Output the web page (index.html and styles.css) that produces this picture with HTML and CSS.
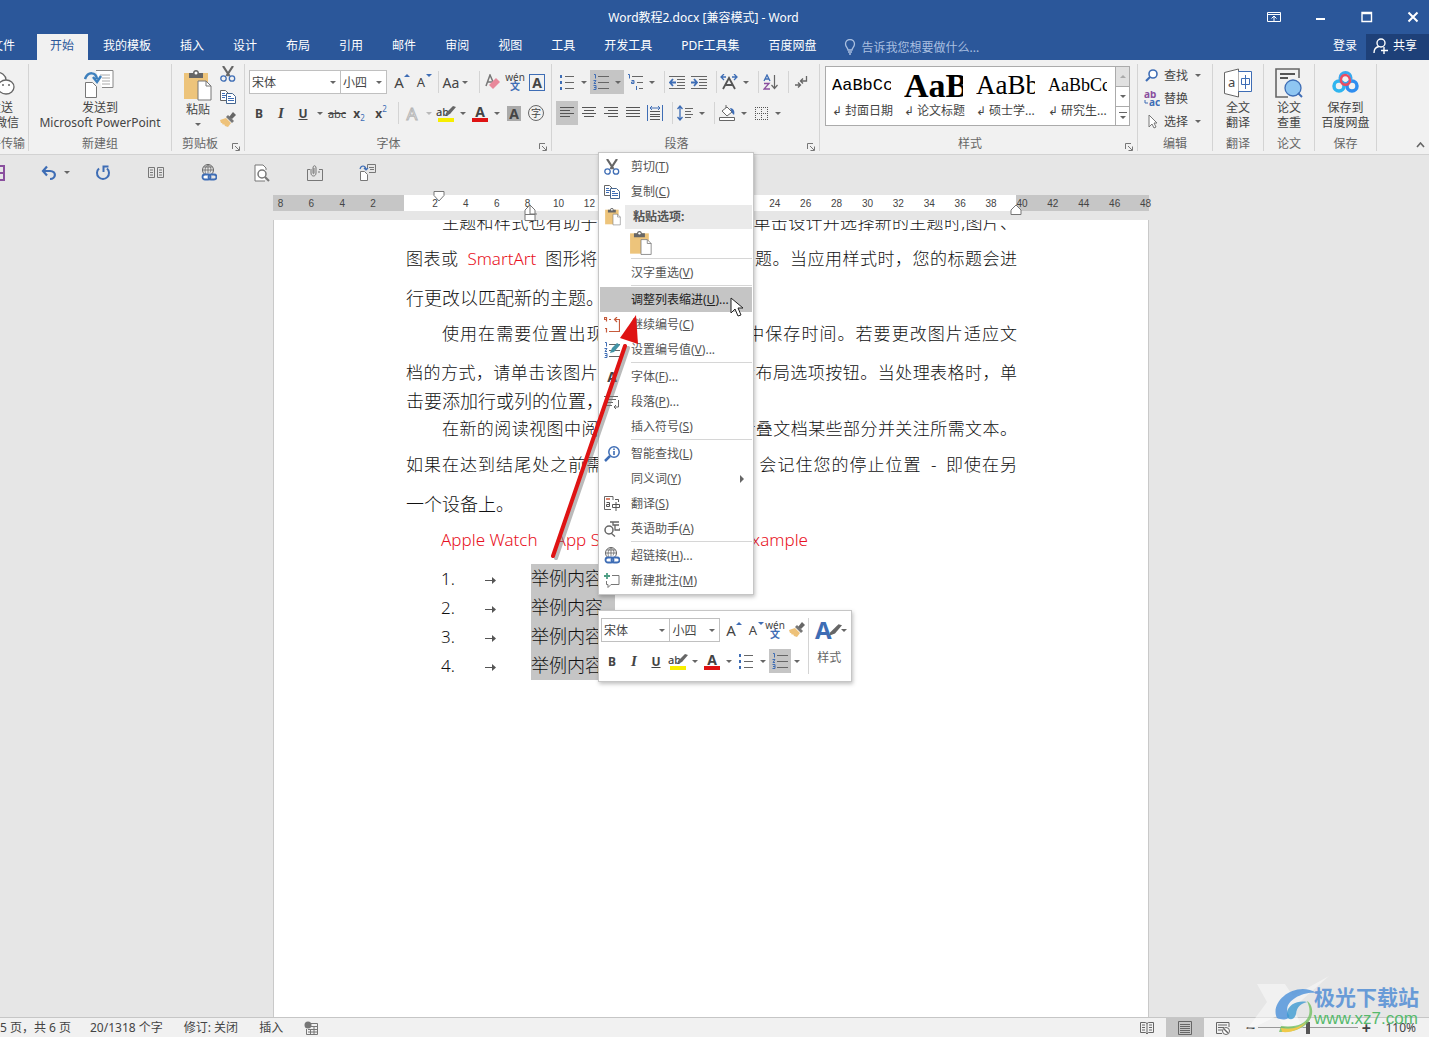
FILE: index.html
```html
<!DOCTYPE html>
<html lang="zh-CN">
<head>
<meta charset="utf-8">
<title>Word教程2.docx - Word</title>
<link rel="stylesheet" href="styles.css">
</head>
<body>
<svg class="defs" aria-hidden="true">
  <symbol id="cut" viewBox="0 0 16 16"><path d="M3 0l6.500 10M13 0L6.500 10" stroke="#666" stroke-width="2.200" fill="none"/><circle cx="3.500" cy="12.500" r="2.700" fill="none" stroke="#3e6db5" stroke-width="1.300"/><circle cx="12" cy="12.500" r="2.700" fill="none" stroke="#3e6db5" stroke-width="1.300"/></symbol>
  <symbol id="copy" viewBox="0 0 16 16"><path d="M.5 1.500h5l3 3v7h-8z" fill="#fff" stroke="#666"/><path d="M2 4.500h3M2 6.500h4M2 8.500h3" stroke="#3e6db5"/><path d="M6.500 4.500h6l3 3v7h-9z" fill="#fff" stroke="#44658f"/><path d="M8 7.500h3M8 9.500h6M8 11.500h6" stroke="#3e6db5"/></symbol>
  <symbol id="brush" viewBox="0 0 16 16"><path d="M0 8l6-2 5 5-3 4-3-1-1-2-1 1-1-2-1 0z" fill="#eec27a"/><path d="M6 5l2-2 6 6-2 2z" fill="#777"/><path d="M9 5l4-5 3 3-4 4z" fill="#666"/></symbol>
  <symbol id="paste" viewBox="0 0 28 32"><path d="M0 3h24v26H0z" fill="#edc47b"/><path d="M5 3h4c0-4 6-4 6 0h4v5H5z" fill="#666"/><circle cx="12" cy="3" r="1.500" fill="#fff"/><path d="M14 11h8l5 5v14H14z" fill="#fff" stroke="#777"/><path d="M22 11v5h5" fill="none" stroke="#777"/></symbol>
  <symbol id="bullets" viewBox="0 0 16 16"><path d="M1 1h2v3H1zM1 7h2v3H1zM1 13h2v3H1z" fill="#3e6db5"/><path d="M6 2.500h9M6 8.500h9M6 14.500h9" stroke="#666"/></symbol>
  <symbol id="numbers" viewBox="0 0 16 16"><path d="M1 .5h1.500v4M0.500 6.500h2.500l-2 3h2M0.500 11.500h2.500v4h-2.500M1 13.500h2" fill="none" stroke="#3e6db5"/><path d="M5 2.500h11M5 8.500h11M5 14.500h11" stroke="#666"/></symbol>
  <symbol id="globe" viewBox="0 0 16 18"><circle cx="7" cy="6" r="5.500" fill="none" stroke="#666"/><path d="M1.500 6h11M2.500 3h9M7 .5v9M7 .5c-4 3-3 8-2 10M7 .5c4 3 3 6 2 8" fill="none" stroke="#666" stroke-width=".8"/><rect x="1.500" y="10.500" width="8" height="5" rx="2.500" fill="#fff" stroke="#3e6db5" stroke-width="1.800"/><rect x="7.500" y="10.500" width="8" height="5" rx="2.500" fill="none" stroke="#3e6db5" stroke-width="1.800"/></symbol>
  <symbol id="launch" viewBox="0 0 8 8"><path d="M.5 6V.5H6M3 3l4 4M7.500 3.500v4h-4" fill="none" stroke="#777"/></symbol>
  <symbol id="pen" viewBox="0 0 12 10"><path d="M2 7l7-7 3 1-6 7-5 2z" fill="#666"/></symbol>
  <symbol id="sendto" viewBox="0 0 32 30"><path d="M12 1.500h17v17H18" fill="#fff" stroke="#888"/><path d="M16 6h10M18 9h8M18 12h8M18 15h8" stroke="#aaa"/><path d="M1 10c3-8 11-7 12 0M9 8l4 5 4-6" fill="none" stroke="#3e80bd" stroke-width="2.500"/><path d="M1.500 13.500h7l4 4v11h-11z" fill="#fff" stroke="#777"/></symbol>
</svg>

<header class="titlebar">
  <h1>Word教程2.docx [兼容模式] - Word</h1>
  <div class="window-buttons">
    <button aria-label="功能区显示选项"><svg width="14" height="12"><path d="M.5 1.500h13v9H.5zM.5 3.500h13M7 10V5.500M4.500 7.500L7 5l2.500 2.500" fill="none" stroke="#fff"/></svg></button>
    <button aria-label="最小化"><svg width="12" height="12"><path d="M1 8h9" stroke="#fff" stroke-width="2"/></svg></button>
    <button aria-label="最大化"><svg width="12" height="12"><path d="M1 1.500h9.500v9H1zM1 2.500h9" fill="none" stroke="#fff" stroke-width="1.400"/></svg></button>
    <button aria-label="关闭"><svg width="12" height="12"><path d="M1.500 1.500l9 9M10.500 1.500l-9 9" stroke="#fff" stroke-width="2"/></svg></button>
  </div>
</header>

<nav class="tabs">
  <button class="file">文件</button><button class="active">开始</button><button>我的模板</button><button>插入</button><button>设计</button><button>布局</button><button>引用</button><button>邮件</button><button>审阅</button><button>视图</button><button>工具</button><button>开发工具</button><button>PDF工具集</button><button>百度网盘</button>
  <label class="tell"><svg width="12" height="16"><path d="M4 11C4 9 1.500 8 1.500 5a4.500 4.500 0 0 1 9 0c0 3-2.500 4-2.500 6zM4 13h4M5 15h2" fill="none" stroke="#a9bfe0" stroke-width="1.300"/></svg><input type="text" placeholder="告诉我您想要做什么..." aria-label="告诉我您想要做什么"></label>
  <button class="login">登录</button>
  <button class="share"><svg width="16" height="16"><circle cx="8" cy="5" r="4" fill="none" stroke="#fff" stroke-width="1.400"/><path d="M1 15c0-4 2-6 5-6.500M11 9v7M8 12.500h7" fill="none" stroke="#fff" stroke-width="1.400"/></svg>共享</button>
</nav>

<section class="ribbon" aria-label="功能区">
  <div class="group g-wechat">
    <button class="big"><svg width="30" height="32"><ellipse cx="10" cy="12" rx="10" ry="8" fill="#fff" stroke="#666" stroke-width="1.300"/><ellipse cx="20" cy="19" rx="8" ry="7" fill="#fff" stroke="#666" stroke-width="1.300"/><circle cx="17" cy="17" r="1" fill="#666"/><circle cx="23" cy="17" r="1" fill="#666"/><circle cx="13" cy="10" r="1" fill="#666"/></svg><span>发送<br>到微信</span></button>
    <h2>文件传输</h2>
  </div>
  <div class="group g-ppt">
    <button class="big"><svg width="32" height="32"><use href="#sendto"/></svg><span>发送到<br>Microsoft PowerPoint</span></button>
    <h2>新建组</h2>
  </div>
  <div class="group g-clip">
    <div class="clip">
      <button class="big"><svg width="28" height="32"><use href="#paste"/></svg><span>粘贴</span><i class="tri"></i></button>
      <div class="stack"><button aria-label="剪切"><svg width="16" height="16"><use href="#cut"/></svg></button><button aria-label="复制"><svg width="16" height="16"><use href="#copy"/></svg></button><button aria-label="格式刷"><svg width="16" height="16"><use href="#brush"/></svg></button></div>
    </div>
    <h2>剪贴板</h2><svg class="launch" width="8" height="8"><use href="#launch"/></svg>
  </div>
  <div class="group g-font">
    <div class="row">
      <label class="combo font"><select aria-label="字体"><option>宋体</option></select></label><label class="combo size"><select aria-label="字号"><option>小四</option></select></label>
      <button class="t grow" aria-label="增大字号">A<i class="up"></i></button><button class="t shrink" aria-label="减小字号">A<i class="down"></i></button>
      <i class="sep"></i><button class="case">Aa<i class="tri"></i></button><i class="sep"></i>
      <button class="t" aria-label="清除格式"><svg width="16" height="16"><path d="M1 12L5 1l4 9M3 8h4" fill="none" stroke="#777" stroke-width="1.500"/><path d="M4 11l7-7 4 4-7 7z" fill="#e8889a"/></svg></button>
      <button class="t pinyin"><span>wén</span><b>文</b></button>
      <button class="t boxed"><b>A</b></button>
    </div>
    <div class="row">
      <button class="t"><b>B</b></button><button class="t serif"><i>I</i></button><button class="t"><b><u>U</u></b></button><i class="tri"></i>
      <button class="t abc"><s>abc</s></button><button class="t sub"><b>x</b><sub>2</sub></button><button class="t sup"><b>x</b><sup>2</sup></button>
      <i class="sep"></i><button class="t outline">A</button><i class="tri pale"></i>
      <button class="t hl"><b>ab</b><svg width="12" height="10"><use href="#pen"/></svg></button><i class="tri"></i><button class="t fc"><b>A</b></button><i class="tri"></i>
      <button class="t shade"><b>A</b></button><button class="t circled"><span>字</span></button>
    </div>
    <h2>字体</h2><svg class="launch" width="8" height="8"><use href="#launch"/></svg>
  </div>
  <div class="group g-para">
    <div class="row">
      <button class="t" aria-label="项目符号"><svg width="16" height="16"><use href="#bullets"/></svg></button><i class="tri"></i>
      <button class="t on" aria-label="编号"><svg width="16" height="16"><use href="#numbers"/></svg></button><span class="on"><i class="tri"></i></span>
      <button class="t" aria-label="多级列表"><svg width="16" height="16"><path d="M1 .5h1.500v4M4.500 6.500h2.500v3H4.500v-1.500H7M9.500 12v4" fill="none" stroke="#3e6db5"/><path d="M5 2.500h11M10 8.500h6M12 14.500h4" stroke="#666"/></svg></button><i class="tri"></i><i class="sep"></i>
      <button class="t" aria-label="减少缩进"><svg width="16" height="16"><path d="M0 2.500h16M8 5.500h8M8 8.500h8M8 11.500h8M0 14.500h16" stroke="#666"/><path d="M7 8.500H1M4 5L1 8.500 4 12" fill="none" stroke="#3e6db5" stroke-width="1.800"/></svg></button>
      <button class="t" aria-label="增加缩进"><svg width="16" height="16"><path d="M0 2.500h16M8 5.500h8M8 8.500h8M8 11.500h8M0 14.500h16" stroke="#666"/><path d="M0 8.500h6M3 5l3 3.500L3 12" fill="none" stroke="#3e6db5" stroke-width="1.800"/></svg></button><i class="sep"></i>
      <button class="t" aria-label="中文版式"><svg width="18" height="16"><path d="M3 15l6-11 6 11M5 11h8" fill="none" stroke="#555" stroke-width="1.800"/><path d="M6 3H1M4 0L1 3l3 3M12 3h5M14 0l3 3-3 3" fill="none" stroke="#3e6db5" stroke-width="1.300"/></svg></button><i class="tri"></i><i class="sep"></i>
      <button class="t" aria-label="排序"><svg width="16" height="16"><path d="M1 7l3-6 3 6M2 5h4" fill="none" stroke="#3e6db5" stroke-width="1.300"/><path d="M1 9.500h5l-5 5.500h6" fill="none" stroke="#8a4f9e" stroke-width="1.300"/><path d="M11.500 1v13M8.500 11l3 3.500 3-3.500" fill="none" stroke="#666" stroke-width="1.200"/></svg></button><i class="sep"></i>
      <button class="t" aria-label="显示编辑标记"><svg width="14" height="14"><path d="M12.500 1v5H7M9 3.500L6.500 6 9 8.500M1 10h5M4 7.500L6.500 10 4 12.500" fill="none" stroke="#666" stroke-width="1.300"/></svg></button>
    </div>
    <div class="row">
      <button class="t on" aria-label="左对齐"><svg width="14" height="14"><path d="M0 1.500h14M0 4.500h10M0 7.500h14M0 10.500h10" stroke="#555"/></svg></button><button class="t" aria-label="居中"><svg width="14" height="14"><path d="M0 1.500h14M2 4.500h10M0 7.500h14M2 10.500h10" stroke="#555"/></svg></button><button class="t" aria-label="右对齐"><svg width="14" height="14"><path d="M0 1.500h14M4 4.500h10M0 7.500h14M4 10.500h10" stroke="#555"/></svg></button><button class="t" aria-label="两端对齐"><svg width="14" height="14"><path d="M0 1.500h14M0 4.500h14M0 7.500h14M0 10.500h14" stroke="#555"/></svg></button><button class="t" aria-label="分散对齐"><svg width="16" height="16"><path d="M.5 0v16M15.500 0v16M3 3h10M5 1L3 3l2 2M11 1l2 2-2 2" fill="none" stroke="#3e6db5"/><path d="M3 6.500h10M3 9.500h10M3 11.500h10M3 14.500h10" stroke="#555"/></svg></button>
      <i class="sep"></i><button class="t" aria-label="行距"><svg width="16" height="16"><path d="M3 1v14M.5 4L3 1l2.500 3M.5 12L3 15l2.500-3" fill="none" stroke="#3e6db5" stroke-width="1.300"/><path d="M8 3.500h8M8 6.500h6M8 9.500h8M8 12.500h6" stroke="#666"/></svg></button><i class="tri"></i><i class="sep"></i>
      <button class="t" aria-label="底纹"><svg width="16" height="16"><path d="M3 6l5-4 5 5-5 4zM7 3V0" fill="#fff" stroke="#666"/><path d="M11 3c4 0 5 4 4 7l-2-2z" fill="#3e6db5"/><path d="M.5 12.500h15v3H.5z" fill="#fff" stroke="#666"/></svg></button><i class="tri"></i>
      <button class="t" aria-label="边框"><svg width="13" height="13"><path d="M.5 0v13M12.500 0v13M6.500 0v13M0 .5h13M0 6.500h13M0 12.500h13" fill="none" stroke="#555" stroke-dasharray="1 1"/></svg></button><i class="tri"></i>
    </div>
    <h2>段落</h2><svg class="launch" width="8" height="8"><use href="#launch"/></svg>
  </div>
  <div class="group g-style">
    <div class="gallery">
      <button><span class="sample mono">AaBbCc</span><span>↲ 封面日期</span></button>
      <button><span class="sample heavy">AaBb</span><span>↲ 论文标题</span></button>
      <button><span class="sample large">AaBb</span><span>↲ 硕士学...</span></button>
      <button><span class="sample plain">AaBbCc</span><span>↲ 研究生...</span></button>
      <div class="scroll"><button class="off" aria-label="上一行"><i class="up"></i></button><button aria-label="下一行"><i class="tri"></i></button><button aria-label="其他"><svg width="8" height="8"><path d="M0 .5h8" stroke="#666"/><path d="M1 4h6L4 7z" fill="#666"/></svg></button></div>
    </div>
    <h2>样式</h2><svg class="launch" width="8" height="8"><use href="#launch"/></svg>
  </div>
  <div class="group g-edit">
    <button><svg width="16" height="14"><circle cx="9" cy="5" r="4" fill="#fff" stroke="#3e6db5" stroke-width="1.600"/><path d="M6 8l-4 4" stroke="#3e6db5" stroke-width="2.200"/></svg>查找<i class="tri"></i></button>
    <button><svg width="16" height="16"><text x="0" y="7" class="glyph violet">ab</text><text x="5" y="15" class="glyph blue">ac</text><path d="M1 9v3h3" fill="none" stroke="#3e6db5"/></svg>替换</button>
    <button><svg width="16" height="16"><path d="M5 1v12l3-3 2 4 2-1-2-4h3z" fill="#fff" stroke="#777"/></svg>选择<i class="tri"></i></button>
    <h2>编辑</h2>
  </div>
  <div class="group g-narrow">
    <button class="big"><svg width="28" height="32"><path d="M.5 4.500L14.500 1v28L.5 25.500z" fill="#fff" stroke="#666"/><path d="M14.500 3.500h13v20h-13" fill="#fff" stroke="#3e6db5"/><text x="4" y="19" class="letter">a</text><path d="M17.500 10.500h8v6h-8zM21.500 7v14" fill="none" stroke="#3e6db5"/></svg><span>全文<br>翻译</span></button>
    <h2>翻译</h2>
  </div>
  <div class="group g-narrow">
    <button class="big"><svg width="28" height="32"><path d="M24 10V1H1v28h12" fill="none" stroke="#666" stroke-width="1.600"/><path d="M5 6h15M5 10h8" stroke="#555" stroke-width="2"/><circle cx="18" cy="20" r="8" fill="#8fc6f2" stroke="#3e6db5" stroke-width="1.300"/><path d="M23 25l4 4" stroke="#3e6db5" stroke-width="2"/></svg><span>论文<br>查重</span></button>
    <h2>论文</h2>
  </div>
  <div class="group g-baidu">
    <button class="big"><svg width="28" height="32"><circle cx="7" cy="18" r="5" fill="none" stroke="#2fb5ef" stroke-width="3.500"/><circle cx="20" cy="18" r="5" fill="none" stroke="#2f8ef0" stroke-width="3.500"/><circle cx="13.500" cy="10" r="5.500" fill="none" stroke="#38a9f0" stroke-width="3"/><path d="M9 13c-1-8 9-8 9 0-1 5-8 5-9 0" fill="none" stroke="#ea4d63" stroke-width="2.500"/></svg><span>保存到<br>百度网盘</span></button>
    <h2>保存</h2>
  </div>
  <button class="collapse" aria-label="折叠功能区"><svg width="9" height="6"><path d="M1 5l3.500-4L8 5" fill="none" stroke="#666" stroke-width="1.600"/></svg></button>
</section>

<div class="quick" role="toolbar" aria-label="快速访问工具栏">
  <button aria-label="保存"><svg width="16" height="16"><path d="M1 1h14v14H1z" fill="none" stroke="#8a4f9e" stroke-width="2"/><path d="M2 8h12" stroke="#8a4f9e" stroke-width="2"/></svg></button>
  <button aria-label="撤消"><svg width="16" height="16"><path d="M2 6h7c7 0 6 8 0 8M6 1.500L2 6l4 4.500" fill="none" stroke="#3e6db5" stroke-width="2.200"/></svg><i class="tri"></i></button>
  <button aria-label="重复"><svg width="16" height="16"><path d="M4 3.500a6 6 0 1 0 8 0M13.500 1.500H8.500V7" fill="none" stroke="#3e6db5" stroke-width="2"/></svg></button>
  <button aria-label="双页"><svg width="18" height="14"><path d="M1.500 1.500h6v10h-6zM10.500 1.500h6v10h-6zM3 4h3M3 6.500h3M3 9h3M12 4h3M12 6.500h3M12 9h3" fill="none" stroke="#777"/></svg></button>
  <button aria-label="超链接"><svg width="16" height="18"><use href="#globe"/></svg></button>
  <button aria-label="打印预览"><svg width="16" height="18"><path d="M12 6V4L9 1H1v16h10" fill="#fff" stroke="#777"/><circle cx="8" cy="10" r="4" fill="#fff" stroke="#777" stroke-width="1.500"/><path d="M11 13l4 4" stroke="#777" stroke-width="2.200"/></svg></button>
  <button aria-label="附件"><svg width="18" height="16"><path d="M4 4.500H1.500v11h15v-11H13M12 7h2" fill="none" stroke="#777"/><path d="M5 4v4c0 4 5 4 5 0V3c0-3-3-3-3 0v5c0 1 1 1 1 0V3" fill="none" stroke="#777"/></svg></button>
  <button aria-label="发送到 PowerPoint"><svg width="18" height="17"><path d="M8.500 5V.5h8v8H10M10 3.500h5M11 5.500h4" fill="none" stroke="#777"/><path d="M1 5c1-4 5-4 6 0M5 4l2 2 2-2" fill="none" stroke="#3e6db5" stroke-width="1.200"/><path d="M1.500 7.500h4l3 3v6h-7z" fill="#fff" stroke="#777"/></svg></button>
</div>

<main class="workspace">
  <div class="ruler">
    <ol><li>8</li><li>6</li><li>4</li><li>2</li><li></li><li>2</li><li>4</li><li>6</li><li>8</li><li>10</li><li>12</li><li>14</li><li>16</li><li>18</li><li>20</li><li>22</li><li>24</li><li>26</li><li>28</li><li>30</li><li>32</li><li>34</li><li>36</li><li>38</li><li>40</li><li>42</li><li>44</li><li>46</li><li>48</li></ol>
    <svg class="mark first" width="12" height="11"><path d="M1 .5h10v4L6 10 1 4.500z" fill="#fff" stroke="#777"/></svg>
    <svg class="mark hang" width="13" height="17"><path d="M1 10.500V6l5-5 5 5v4.500zM1 10.500h10v6H1z" fill="#fff" stroke="#777"/><path d="M6 1v9h7" fill="none" stroke="#777"/></svg>
    <svg class="mark right" width="12" height="11"><path d="M1 10.500V6l5-5 5 5v4.500z" fill="#fff" stroke="#777"/></svg>
  </div>
  <article class="paper">
    <div class="text">
      <p class="line indent">主题和样式也有助于文档保持协调。当您单击设计并选择新的主题时,图片、</p>
      <p class="line near">图表或 <em class="word">SmartArt</em> 图形将会更改以匹配新的主题。当应用样式时，您的标题会进</p>
      <p class="line far last">行更改以匹配新的主题。</p>
      <p class="line near indent">使用在需要位置出现的新按钮在 Word 中保存时间。若要更改图片适应文</p>
      <p class="line far">档的方式，请单击该图片，图片旁边将会显示布局选项按钮。当处理表格时，单</p>
      <p class="line last">击要添加行或列的位置，然后单击加号。</p>
      <p class="line indent">在新的阅读视图中阅读更加容易。可以折叠文档某些部分并关注所需文本。</p>
      <p class="line near">如果在达到结尾处之前需要停止读取，Word 会记住您的停止位置 <span class="word">-</span> 即使在另</p>
      <p class="line far last">一个设备上。</p>
      <p class="line near terms"><em>Apple Watch</em><em>App Store</em><em>Example</em></p>
      <ol class="list">
        <li><span>1.</span><svg width="12" height="29"><path d="M0 16.500h9" stroke="#555"/><path d="M7 13l4 3.500-4 3.500z" fill="#555"/></svg><mark>举例内容</mark></li>
        <li><span>2.</span><svg width="12" height="29"><path d="M0 16.500h9" stroke="#555"/><path d="M7 13l4 3.500-4 3.500z" fill="#555"/></svg><mark>举例内容</mark></li>
        <li><span>3.</span><svg width="12" height="29"><path d="M0 16.500h9" stroke="#555"/><path d="M7 13l4 3.500-4 3.500z" fill="#555"/></svg><mark>举例内容</mark></li>
        <li><span>4.</span><svg width="12" height="29"><path d="M0 16.500h9" stroke="#555"/><path d="M7 13l4 3.500-4 3.500z" fill="#555"/></svg><mark>举例内容</mark></li>
      </ol>
    </div>
  </article>
</main>

<footer class="status">
  <span class="pages">第 5 页，共 6 页</span><span>20/1318 个字</span><span>修订: 关闭</span><span>插入</span>
  <svg width="14" height="14"><circle cx="4" cy="4" r="3.500" fill="#777"/><path d="M7 2.500h6.500v11h-11V8M7 5.500h6M4 8.500h9M4 11h9M6.500 8v5M10 6v7" fill="none" stroke="#777"/></svg>
  <div class="views">
    <button aria-label="阅读视图"><svg width="14" height="14"><path d="M.5 1.500h5l1.500 1 1.500-1h5v10h-5L7 13l-1.500-1.500h-5zM7 2v11M2 4h3M2 6.500h3M2 9h3M9 4h3M9 6.500h3M9 9h3" fill="none" stroke="#666"/></svg></button>
    <button class="on" aria-label="页面视图"><svg width="14" height="14"><path d="M.5.500h13v13H.5zM2 3.500h10M2 5.500h10M2 7.500h10M2 9.500h10M2 11.500h10" fill="none" stroke="#666"/></svg></button>
    <button aria-label="Web 版式视图"><svg width="14" height="14"><path d="M13 6V1.500H.5v11H6M2 4h9M2 6.500h6M2 9h4" fill="none" stroke="#666"/><circle cx="10" cy="10" r="3.500" fill="#fff" stroke="#666"/><path d="M8 8l4 4" stroke="#666" stroke-width="1.500"/></svg></button>
  </div>
  <div class="zoom"><button aria-label="缩小">−</button><input type="range" min="10" max="210" value="110" aria-label="显示比例"><button aria-label="放大">+</button><span>110%</span></div>
</footer>

<div class="watermark">
  <svg width="160" height="60" viewBox="0 0 160 60"><path d="M18 8h28l8 12L90 0 54 32l10 20H46l-8-12L6 56l22-30z" fill="#fff" opacity=".45"/><path d="M38 42C30 26 56 4 78 17c-16-2-36 10-28 22 2 4-6 6-12 3z" fill="#4a90d9" opacity=".8"/><path d="M42 50c22 3 34-8 26-25 10 6 8 32-28 31z" fill="#72bf62" opacity=".8"/><path d="M48 38c0-10 12-14 20-12-6 2-10 4-11 12-2 8-10 6-9 0z" fill="#3d9ad1" opacity=".8"/><path d="M42 52c10 2 18 0 25-6-5 7-14 11-24 10z" fill="#f0c94a"/></svg>
  <p><strong>极光下载站</strong><span>www.xz7.com</span></p>
</div>

<ul class="menu" role="menu">
  <li><button><svg width="16" height="16"><use href="#cut"/></svg>剪切(<u>T</u>)</button></li>
  <li><button><svg width="16" height="16"><use href="#copy"/></svg>复制(<u>C</u>)</button></li>
  <li class="head"><svg width="16" height="18"><use href="#paste"/></svg><strong>粘贴选项:</strong></li>
  <li class="options"><button aria-label="保留源格式"><svg width="22" height="25"><use href="#paste"/></svg></button></li>
  <li class="rule"></li>
  <li><button><i></i>汉字重选(<u>V</u>)</button></li>
  <li class="rule"></li>
  <li><button class="hover"><i></i>调整列表缩进(<u>U</u>)...</button></li>
  <li><button><svg width="16" height="16"><path d="M.5.5h2v2h-2zM2.500 2v2.500M1 11.500h1.500v4M5 2.500h2M5 14.500h10.500V2.500H11M13 0L10.500 2.500 13 5" fill="none" stroke="#c65b3c" stroke-width="1.200"/></svg>继续编号(<u>C</u>)</button></li>
  <li><button><svg width="16" height="16"><use href="#numbers"/><path d="M6 11l2-5 5-5 3 2-6 7z" fill="#4393a5"/></svg>设置编号值(<u>V</u>)...</button></li>
  <li class="rule"></li>
  <li><button><b>A</b>字体(<u>F</u>)...</button></li>
  <li><button><svg width="16" height="16"><path d="M0 2.500h14M2 5.500h10M2 8.500h7M2 11.500h6M14.500 6v7H10M12 11l-2 2 2 2" fill="none" stroke="#666"/></svg>段落(<u>P</u>)...</button></li>
  <li><button><i></i>插入符号(<u>S</u>)</button></li>
  <li class="rule"></li>
  <li><button><svg width="16" height="16"><circle cx="10" cy="6" r="5.200" fill="#fff" stroke="#3e6db5" stroke-width="1.500"/><path d="M6 10l-5 5" stroke="#3e6db5" stroke-width="2.500"/><path d="M10 5v4M10 2.500v1.500" stroke="#3e6db5" stroke-width="1.600"/></svg>智能查找(<u>L</u>)</button></li>
  <li><button><i></i>同义词(<u>Y</u>)<span class="sub-arrow"></span></button></li>
  <li><button><svg width="16" height="16"><path d="M9 4V.5H.5v13H7" fill="none" stroke="#666"/><path d="M2 3h4" stroke="#d0583a" stroke-width="1.500"/><path d="M2.500 6.500h3v4h-3v-2h3M8.500 8.500h7v3h-7zM12 6v9M11 3.500h3.500V6" fill="none" stroke="#555"/></svg>翻译(<u>S</u>)</button></li>
  <li><button><svg width="16" height="16"><circle cx="5" cy="9" r="4" fill="none" stroke="#666" stroke-width="1.500"/><path d="M7 12l4 3.500M6 1h9M9 1v3h6M11 4v5h5V7" fill="none" stroke="#666" stroke-width="1.300"/></svg>英语助手(<u>A</u>)</button></li>
  <li class="rule"></li>
  <li><button><svg width="16" height="18"><use href="#globe"/></svg>超链接(<u>H</u>)...</button></li>
  <li><button><svg width="16" height="16"><path d="M8 2.500h7v9H7l-3 3v-3H2.500V8" fill="none" stroke="#777"/><path d="M0 3h6M3 0v6" stroke="#4e9e84" stroke-width="1.800"/></svg>新建批注(<u>M</u>)</button></li>
</ul>

<div class="mini" role="toolbar" aria-label="浮动工具栏">
  <div class="mini-tools">
    <div class="row">
      <label class="combo mfont"><select aria-label="浮动字体"><option>宋体</option></select></label><label class="combo msize"><select aria-label="浮动字号"><option>小四</option></select></label>
      <button class="t grow" aria-label="增大">A<i class="up"></i></button><button class="t shrink" aria-label="减小">A<i class="down"></i></button>
      <button class="t pinyin"><span>wén</span><b>文</b></button><button class="t" aria-label="格式刷"><svg width="16" height="16"><use href="#brush"/></svg></button>
    </div>
    <div class="row">
      <button class="t"><b>B</b></button><button class="t serif"><i>I</i></button><button class="t"><b><u>U</u></b></button>
      <button class="t hl"><b>ab</b><svg width="12" height="10"><use href="#pen"/></svg></button><i class="tri"></i><button class="t fc"><b>A</b></button><i class="tri"></i>
      <button class="t" aria-label="项目符号"><svg width="16" height="16"><use href="#bullets"/></svg></button><i class="tri"></i><button class="t on" aria-label="编号"><svg width="16" height="16"><use href="#numbers"/></svg></button><i class="tri"></i>
    </div>
  </div>
  <button class="mini-style"><span class="bigA"><b>A</b><svg width="14" height="12"><use href="#pen"/></svg><i class="tri"></i></span>样式</button>
</div>

<svg class="pointer-arrow" width="100" height="256"><path d="M7 246L79 36" stroke="#777" stroke-width="4" opacity=".5" stroke-linecap="round"/><path d="M4 244L76 34" stroke="#df1313" stroke-width="4" stroke-linecap="round"/><path d="M87 3l2 29-18-6z" fill="#df1313"/></svg>
<svg class="cursor" width="14" height="20"><path d="M1 1v15l4-4 3 7 3-1-3-7h5z" fill="#fff" stroke="#222"/></svg>
</body>
</html>
```
FILE: styles.css
```css
* { box-sizing: border-box; }
body {
  margin: 0;
  min-height: 100vh;
  display: flex;
  flex-direction: column;
  position: relative;
  overflow: hidden;
  background: #e6e6e6;
  color: #444;
  font: 12px/15px "Noto Sans", "Noto Sans CJK SC", sans-serif;
}
button, input, select { font: inherit; color: inherit; border: 0; background: none; padding: 0; margin: 0; }
button { display: flex; align-items: center; justify-content: center; white-space: nowrap; }
svg { flex: none; display: block; }
h1, h2, p, ol, ul { margin: 0; padding: 0; list-style: none; font-size: inherit; font-weight: inherit; }
.defs { position: absolute; width: 0; height: 0; }

.tri, .up, .down { flex: none; width: 12px; display: flex; justify-content: center; }
.tri::before, .down::before { content: ""; border: 3px solid transparent; border-top-color: #666; border-bottom: 0; }
.up::before { content: ""; border: 3px solid transparent; border-bottom-color: #666; border-top: 0; }
.pale { opacity: .4; }

.titlebar { height: 34px; background: #2b579a; color: #fff; display: flex; align-items: center; }
.titlebar h1 { flex: 1; text-align: center; padding-left: 140px; }
.window-buttons { display: flex; gap: 34px; padding-right: 10px; }

.tabs { height: 26px; background: #2b579a; color: #fff; display: flex; gap: 1px; }
.tabs button { flex: none; padding: 0 14px 3px; }
.tabs .file { margin-left: -23px; margin-right: 7px; }
.tabs .active { background: #f1f1f1; color: #2b579a; padding-left: 13px; }
.tell { display: flex; align-items: center; gap: 5px; margin-left: 13px; flex: 1; }
.tell input { width: 140px; color: #a9bfe0; }
.tell input::placeholder { color: #a9bfe0; opacity: 1; }
.tabs .login { padding-right: 8px; }
.tabs .share { background: #1e4078; gap: 4px; padding-left: 7px; padding-right: 12px; }

.ribbon { height: 95px; flex: none; background: #f1f1f1; border-bottom: 1px solid #d2d2d2; display: flex; padding: 4px 0 3px; overflow: hidden; }
.group { flex: none; border-right: 1px solid #d4d4d4; position: relative; display: flex; flex-direction: column; }
.group h2 { color: #666; text-align: center; margin-top: auto; line-height: 14px; }
.g-wechat { width: 55px; margin-left: -26px; }
.g-ppt { width: 143px; }
.g-clip { width: 73px; }
.g-clip h2 { padding-right: 16px; }
.g-font { width: 307px; padding-left: 3px; }
.g-para { width: 268px; padding-left: 4px; }
.g-font h2, .g-para h2, .g-style h2 { padding-right: 22px; }
.g-style { width: 318px; padding-left: 5px; }
.g-edit { width: 75px; padding-left: 6px; }
.g-edit h2 { padding-right: 6px; }
.g-narrow { width: 51px; }
.g-baidu { width: 62px; }
.launch { position: absolute; right: 4px; bottom: 0; }
.big { flex-direction: column; width: 100%; padding-top: 4px; }
.big .tri { margin-top: 6px; }
.clip { display: flex; padding-left: 11px; }
.clip .big { width: 30px; padding-top: 3px; }
.stack { display: flex; flex-direction: column; gap: 7px; padding: 2px 0 0 7px; }
.collapse { margin-left: auto; align-self: flex-end; padding: 0 4px 3px 0; }

.row { display: flex; align-items: center; height: 24px; }
.group .row { margin-top: 6px; }
.group .row + .row { margin-top: 7px; }
.row .sep { width: 7px; height: 22px; border-right: 1px solid #d4d4d4; margin-right: 1px; flex: none; }
.g-font .row .sep { margin-right: 2px; }
.t { width: 22px; height: 22px; flex: none; position: relative; }
.on { background: #c5c5c5; height: 24px; display: flex; align-items: center; }
.combo { position: relative; height: 24px; border: 1px solid #c0c0c0; background: #fff; display: flex; }
.combo select { appearance: none; width: 100%; padding-left: 2px; }
.combo::after { content: ""; position: absolute; right: 4px; top: 10px; border: 3px solid transparent; border-top-color: #666; border-bottom: 0; }
.font { width: 92px; margin-left: 1px; }
.size { width: 47px; margin-left: -1px; }
.size + .t { margin-left: 1px; }
.grow { font-size: 15px; }
.shrink { font-size: 13px; }
.grow .up, .shrink .down { position: absolute; top: 3px; right: -3px; }
.up::before { border-bottom-color: #3e6db5; }
.shrink .down::before { border-top-color: #3e6db5; }
.case { width: 32px; font-size: 14px; }
.pinyin { flex-direction: column; font-size: 10px; line-height: 9px; }
.pinyin b { color: #3e6db5; }
.boxed b { border: 1px solid #3e6db5; width: 16px; font-size: 14px; line-height: 15px; }
.serif i { font: italic bold 15px "Liberation Serif", serif; }
.abc { font-size: 11px; }
.abc s { margin: 0 -2px; }
.sub sub, .sup sup { color: #3e6db5; font-size: 8px; line-height: 8px; }
.sub sub { align-self: flex-end; margin-bottom: 2px; }
.sup sup { align-self: flex-start; margin-top: 3px; }
.outline { font-size: 17px; color: #fff; -webkit-text-stroke: 1px #b5b5b5; }
.hl, .fc { border-bottom: 4px solid #f7ee00; width: 16px; height: 17px; margin: 0 3px; }
.hl { font-size: 11px; }
.hl b { font-weight: 500; }
.hl svg { margin-left: -5px; }
.fc { border-bottom-color: #df1313; font-size: 14px; }
.shade b { background: #aaa; width: 14px; line-height: 15px; font-size: 14px; }
.circled span { border: 1px solid #666; border-radius: 50%; width: 16px; height: 16px; font-size: 10px; line-height: 14px; }

.gallery { display: flex; height: 60px; margin-top: 2px; width: 305px; border: 1px solid #ababab; background: #fff; }
.gallery > button { width: 72px; padding-left: 6px; flex-direction: column; align-items: flex-start; justify-content: flex-start; overflow: hidden; }
.sample { display: flex; align-items: center; height: 36px; width: 59px; overflow: hidden; color: #000; font-family: "Liberation Serif", serif; }
.mono { font-family: "Liberation Mono", monospace; font-size: 17px; }
.heavy { font-size: 34px; font-weight: bold; }
.large { font-size: 27px; }
.plain { font-size: 18px; }
.scroll { margin-left: auto; width: 14px; display: grid; grid-template-rows: 1fr 1fr 1fr; }
.scroll button { border-left: 1px solid #ababab; border-top: 1px solid #ababab; overflow: hidden; }
.scroll .off { background: #e1e1e1; border-top: 0; }
.scroll .off .up::before { border-bottom-color: #aaa; }

.g-edit button { justify-content: flex-start; gap: 4px; height: 23px; }
.glyph { font-size: 10px; font-weight: bold; }
.violet { fill: #8a4f9e; }
.blue { fill: #3e6db5; }
.letter { font-size: 13px; fill: #444; }

.quick { height: 35px; flex: none; display: grid; grid-template-columns: repeat(8, 53px); margin-left: -30px; }
.quick button:nth-child(2) { gap: 4px; padding-left: 14px; }

.workspace { flex: 1; padding: 5px 7px 0 0; display: flex; flex-direction: column; align-items: center; }
.ruler { width: 876px; height: 16px; position: relative; background: linear-gradient(to right, #c6c6c6 131px, #fff 131px, #fff 743px, #c6c6c6 743px); }
.ruler ol { display: grid; grid-template-columns: repeat(29, 1fr); margin: 0 -12px 0 -8px; font: 10px/17px "Liberation Sans", sans-serif; text-align: center; }
.mark { position: absolute; }
.first { left: 160px; top: -4px; }
.hang { left: 251px; top: 9px; }
.right { left: 737px; top: 9px; }
.paper { flex: 1; width: 876px; margin-top: 9px; background: #fff; border: solid #c9c9c9; border-width: 0 1px; padding: 0 131px 0 132px; overflow: hidden; }
.text { margin-top: -11px; color: #111; font: 300 17px/28px "Noto Sans", "Noto Sans CJK SC", sans-serif; }
.text em { font-style: normal; font-weight: 400; color: #e81123; }
.line { text-align: justify; text-align-last: justify; white-space: nowrap; }
.line .word { margin: 0 4px; font-weight: 300; }
.last { text-align-last: left; }
.indent { padding-left: 36px; }
.near { margin-top: 8px; }
.far { margin-top: 11px; }
.terms { display: flex; gap: 18px; padding-left: 35px; width: 402px; }
.text .terms em { font-weight: 300; }
.terms em:last-child { margin-left: auto; }
.last, .list mark { font-size: 18px; }
.list { margin-top: 10px; padding-left: 35px; line-height: 29px; }
.list li { display: grid; grid-template-columns: 44px 46px 84px; }
.list mark { background: #c5c5c5; color: inherit; }

.status { height: 20px; flex: none; background: #f1f1f1; border-top: 1px solid #c6c6c6; display: flex; align-items: center; gap: 21px; white-space: nowrap; }
.pages { width: 71px; margin-right: -2px; display: flex; justify-content: flex-end; }
.views { display: flex; margin-left: auto; height: 19px; }
.views button { width: 38px; height: 19px; }
.zoom { display: flex; align-items: center; gap: 3px; margin-left: -18px; padding-right: 13px; }
.zoom button { font-size: 16px; font-weight: bold; line-height: 16px; width: 10px; }
.zoom span { margin-left: 11px; }
.zoom input { appearance: none; width: 100px; height: 12px; background: linear-gradient(#999, #999) center / 100% 1px no-repeat; }
.zoom input::-webkit-slider-thumb { appearance: none; width: 4px; height: 12px; background: #555; }

.watermark { position: absolute; right: 10px; bottom: 1px; display: flex; pointer-events: none; }
.watermark svg { margin-right: -85px; }
.watermark p { display: flex; flex-direction: column; padding-top: 9px; }
.watermark strong { font-size: 21px; line-height: 24px; color: #5b93d6; opacity: .9; }
.watermark span { font: 17px/19px "Liberation Sans", sans-serif; color: #56b96c; }

.menu, .mini { position: absolute; left: 598px; background: #fff; border: 1px solid #c6c6c6; box-shadow: 1px 2px 4px rgba(0, 0, 0, .25); }
.menu { top: 152px; width: 156px; padding: 1px; color: #555; }
.menu button { width: 100%; height: 25px; justify-content: flex-start; padding-left: 4px; }
.menu button > svg, .menu button > i, .menu button > b { width: 16px; margin-right: 11px; flex: none; }
.menu button > b { font-size: 14px; text-align: center; color: #444; }
.menu .hover { background: #c5c5c5; color: #222; }
.menu .head { height: 25px; display: flex; align-items: center; gap: 4px; padding-left: 5px; }
.menu .head strong { background: #eaeaea; flex: 1; line-height: 24px; padding-left: 8px; }
.menu .options { height: 29px; padding-left: 30px; }
.menu .options button { width: 22px; height: 29px; padding: 0; }
.menu .options svg { width: 22px; margin: 0; }
.menu .rule { height: 2px; margin-left: 31px; border-top: 1px solid #d6d6d6; }
.sub-arrow { margin-left: auto; margin-right: 8px; border: 4px solid transparent; border-left-color: #666; border-right: 0; }

.mini { top: 610px; width: 254px; height: 72px; display: flex; padding: 7px 2px; }
.mini-tools { display: flex; flex-direction: column; gap: 7px; width: 208px; border-right: 1px solid #d4d4d4; }
.mini-tools .row + .row { margin-top: 0; }
.mfont { width: 70px; }
.msize { width: 51px; margin-left: -1px; }
.mini-style { flex: 1; flex-direction: column; gap: 8px; justify-content: flex-start; color: #666; }
.bigA { display: flex; align-items: center; padding-left: 6px; }
.bigA b { font-size: 24px; line-height: 24px; color: #3e6db5; }
.bigA svg { margin: 0 -4px; }

.pointer-arrow { position: absolute; left: 549px; top: 312px; pointer-events: none; }
.cursor { position: absolute; left: 730px; top: 297px; pointer-events: none; }
```
